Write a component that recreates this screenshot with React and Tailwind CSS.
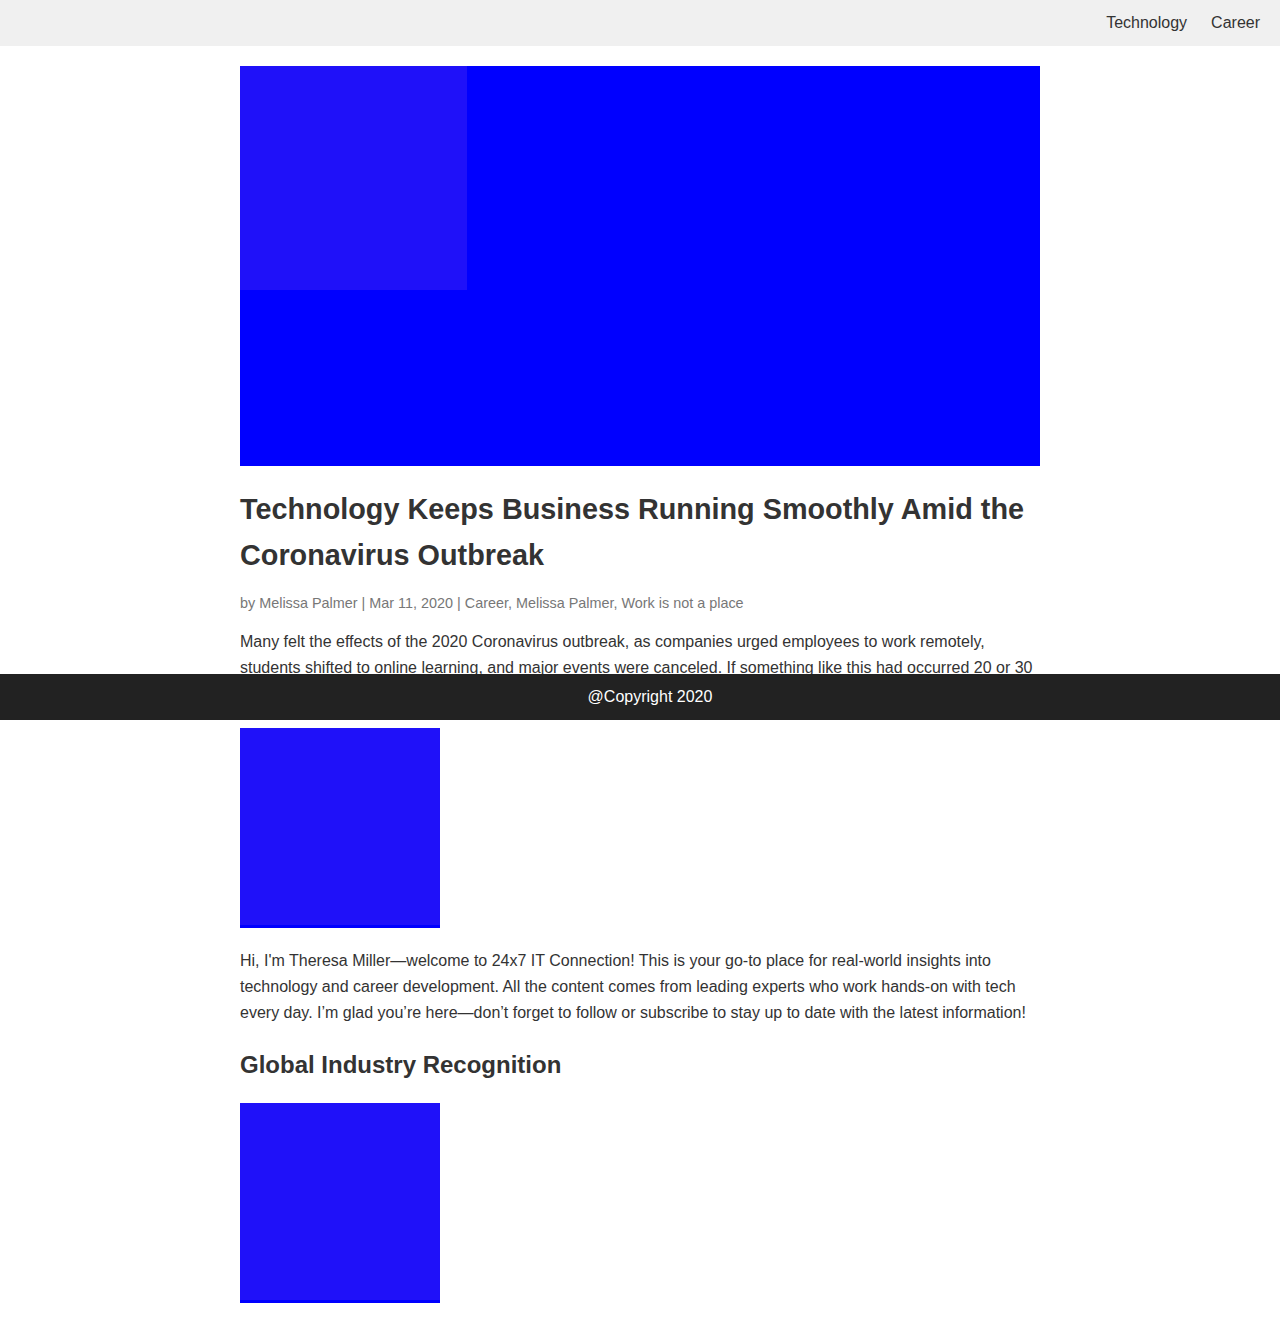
export default function App() {
  const font = { fontFamily: '"Liberation Sans", Arial, Helvetica, sans-serif' };
  return (
    <div className="relative min-h-[1343px] bg-white text-[#333333]" style={font}>
      <nav className="flex h-[46px] items-center justify-end gap-[24px] bg-[#f0f0f0] pr-[20px]">
        <a className="text-[16px] text-[#333333]">Technology</a>
        <a className="text-[16px] text-[#333333]">Career</a>
      </nav>
      <main className="mx-auto w-[800px] pt-[20px] pb-[40px]">
        <div className="flex h-[400px] w-[800px] items-start bg-[#0000ff]">
          <div className="h-[224px] w-[227px] bg-[#1f11f9]" />
        </div>
        <h1 className="mt-[20px] text-[28.8px] font-bold leading-[46px] text-[#333333]">
          Technology Keeps Business Running Smoothly Amid the Coronavirus Outbreak
        </h1>
        <p className="mt-[14px] text-[14.4px] leading-[22px] text-[#777777]">
          by Melissa Palmer | Mar 11, 2020 | Career, Melissa Palmer, Work is not a place
        </p>
        <p className="mt-[15px] text-[16px] leading-[26px]">
          Many felt the effects of the 2020 Coronavirus outbreak, as companies urged employees to work remotely,
          students shifted to online learning, and major events were canceled. If something like this had occurred 20 or 30
          years ago, the impact on business would have been far greater.
        </p>
        <div className="mt-[21px] flex h-[200px] w-[200px] flex-col bg-[#0000ff]">
          <div className="h-[197px] w-[200px] bg-[#1f11f9]" />
        </div>
        <p className="mt-[20px] text-[16px] leading-[26px]">
          Hi, I'm Theresa Miller—welcome to 24x7 IT Connection! This is your go-to place for real-world insights into
          technology and career development. All the content comes from leading experts who work hands-on with tech
          every day. I’m glad you’re here—don’t forget to follow or subscribe to stay up to date with the latest information!
        </p>
        <h2 className="mt-[21px] text-[24px] font-bold leading-[36px] text-[#333333]">Global Industry Recognition</h2>
        <div className="mt-[20px] flex h-[200px] w-[200px] flex-col bg-[#0000ff]">
          <div className="h-[197px] w-[200px] bg-[#1f11f9]" />
        </div>
      </main>
      <footer className="absolute left-0 right-0 top-[674px] flex h-[46px] items-center justify-center bg-[#222222] pl-[20px] text-[16px] text-white">
        @Copyright 2020
      </footer>
    </div>
  );
}
